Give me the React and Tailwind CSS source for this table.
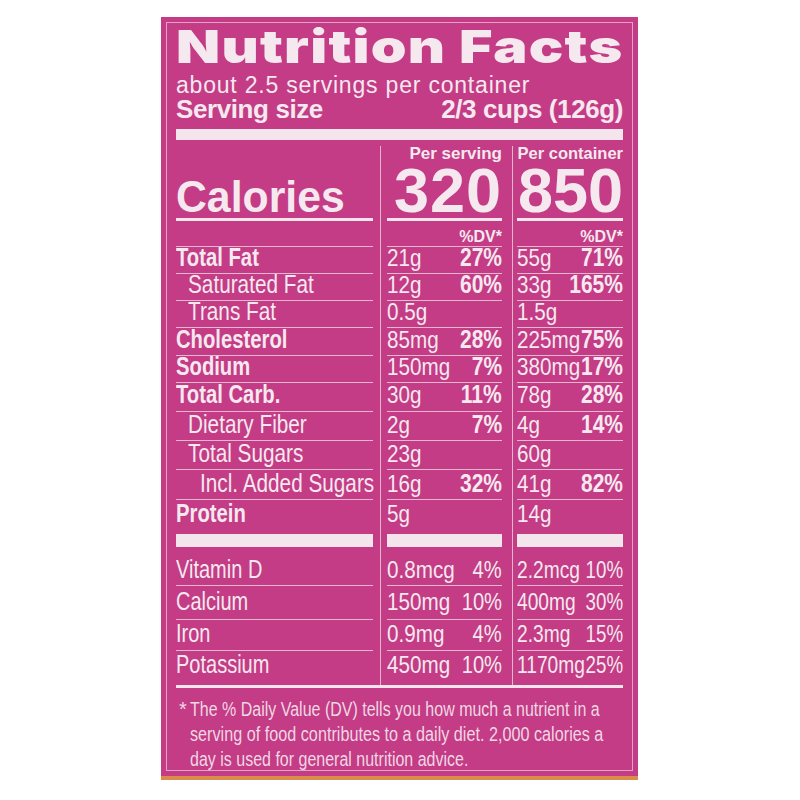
import React from "react";

const rows = [
  { label: "Total Fat", bold: true, ind: "pl-0", v1: "21g", p1: "27%", v2: "55g", p2: "71%", h: "h-[27px]", pb: "pb-[3px]", line: true },
  { label: "Saturated Fat", bold: false, ind: "pl-[12px]", v1: "12g", p1: "60%", v2: "33g", p2: "165%", h: "h-[27px]", pb: "pb-[3px]", line: true },
  { label: "Trans Fat", bold: false, ind: "pl-[12px]", v1: "0.5g", p1: "", v2: "1.5g", p2: "", h: "h-[27px]", pb: "pb-[3px]", line: true },
  { label: "Cholesterol", bold: true, ind: "pl-0", v1: "85mg", p1: "28%", v2: "225mg", p2: "75%", h: "h-[28px]", pb: "pb-[3px]", line: true },
  { label: "Sodium", bold: true, ind: "pl-0", v1: "150mg", p1: "7%", v2: "380mg", p2: "17%", h: "h-[27px]", pb: "pb-[3px]", line: true },
  { label: "Total Carb.", bold: true, ind: "pl-0", v1: "30g", p1: "11%", v2: "78g", p2: "28%", h: "h-[29px]", pb: "pb-[4px]", line: true },
  { label: "Dietary Fiber", bold: false, ind: "pl-[12px]", v1: "2g", p1: "7%", v2: "4g", p2: "14%", h: "h-[29px]", pb: "pb-[3px]", line: true },
  { label: "Total Sugars", bold: false, ind: "pl-[12px]", v1: "23g", p1: "", v2: "60g", p2: "", h: "h-[29px]", pb: "pb-[3px]", line: true },
  { label: "Incl. Added Sugars", bold: false, ind: "pl-[24px]", v1: "16g", p1: "32%", v2: "41g", p2: "82%", h: "h-[30px]", pb: "pb-[3px]", line: true },
  { label: "Protein", bold: true, ind: "pl-0", v1: "5g", p1: "", v2: "14g", p2: "", h: "h-[34px]", pb: "pb-[8px]", line: false },
];

const vits = [
  { label: "Vitamin D", v1: "0.8mcg", p1: "4%", v2: "2.2mcg", p2: "10%", h: "h-[39px]", pb: "pb-[3px]", line: true },
  { label: "Calcium", v1: "150mg", p1: "10%", v2: "400mg", p2: "30%", h: "h-[34px]", pb: "pb-[5px]", line: true },
  { label: "Iron", v1: "0.9mg", p1: "4%", v2: "2.3mg", p2: "15%", h: "h-[31px]", pb: "pb-[4px]", line: true },
  { label: "Potassium", v1: "450mg", p1: "10%", v2: "1170mg", p2: "25%", h: "h-[34px]", pb: "pb-[8px]", line: false },
];

function Div1({ top = "" }) {
  return (
    <div className={`w-[14px] flex justify-center ${top}`}>
      <div className="w-px bg-[#eab4d0]" />
    </div>
  );
}

function Div2({ top = "" }) {
  return (
    <div className={`w-[15px] flex pl-[10px] ${top}`}>
      <div className="w-px bg-[#eab4d0]" />
    </div>
  );
}

function MacroRow({ r }) {
  const lineCls = r.line ? "border-b border-[#e9b6d0]" : "";
  return (
    <div className={`flex ${r.h}`}>
      <div className={`w-[197px] flex items-end ${lineCls} ${r.pb} ${r.ind}`}>
        {r.bold ? (
          <span className="inline-block origin-left scale-x-[0.81] text-[25px] leading-[25px] font-bold whitespace-nowrap">{r.label}</span>
        ) : (
          <span className="inline-block origin-left scale-x-[0.83] text-[25px] leading-[25px] whitespace-nowrap">{r.label}</span>
        )}
      </div>
      <Div1 />
      <div className={`w-[115px] flex items-end ${lineCls} ${r.pb}`}>
        <div className="flex-1 min-w-0 flex whitespace-nowrap text-[24px] leading-[25px]">
          <span className="inline-block origin-left scale-x-[0.86]">{r.v1}</span>
        </div>
        <div className="w-0 flex justify-end whitespace-nowrap text-[25px] leading-[25px] font-bold">
          <span className="inline-block origin-right scale-x-[0.84]">{r.p1}</span>
        </div>
      </div>
      <Div2 />
      <div className={`w-[106px] flex items-end ${lineCls} ${r.pb}`}>
        <div className="flex-1 min-w-0 flex whitespace-nowrap text-[24px] leading-[25px]">
          <span className="inline-block origin-left scale-x-[0.86]">{r.v2}</span>
        </div>
        <div className="w-0 flex justify-end whitespace-nowrap text-[25px] leading-[25px] font-bold">
          <span className="inline-block origin-right scale-x-[0.84]">{r.p2}</span>
        </div>
      </div>
    </div>
  );
}

function VitRow({ r }) {
  const lineCls = r.line ? "border-b border-[#e9b6d0]" : "";
  return (
    <div className={`flex ${r.h}`}>
      <div className={`w-[197px] flex items-end ${lineCls} ${r.pb}`}>
        <span className="inline-block origin-left scale-x-[0.8] text-[25px] leading-[25px] whitespace-nowrap">{r.label}</span>
      </div>
      <Div1 />
      <div className={`w-[115px] flex items-end ${lineCls} ${r.pb}`}>
        <div className="flex-1 min-w-0 flex whitespace-nowrap text-[24px] leading-[25px]">
          <span className="inline-block origin-left scale-x-[0.86]">{r.v1}</span>
        </div>
        <div className="w-0 flex justify-end whitespace-nowrap text-[24px] leading-[25px]">
          <span className="inline-block origin-right scale-x-[0.84]">{r.p1}</span>
        </div>
      </div>
      <Div2 />
      <div className={`w-[106px] flex items-end ${lineCls} ${r.pb}`}>
        <div className="flex-1 min-w-0 flex whitespace-nowrap text-[24px] leading-[25px]">
          <span className="inline-block origin-left scale-x-[0.8]">{r.v2}</span>
        </div>
        <div className="w-0 flex justify-end whitespace-nowrap text-[24px] leading-[25px]">
          <span className="inline-block origin-right scale-x-[0.78]">{r.p2}</span>
        </div>
      </div>
    </div>
  );
}

function ThickBar() {
  return (
    <div className="flex h-[13px]">
      <div className="w-[197px] bg-[#f4e5ed]" />
      <Div1 />
      <div className="w-[115px] bg-[#f4e5ed]" />
      <Div2 />
      <div className="w-[106px] bg-[#f4e5ed]" />
    </div>
  );
}

export default function App() {
  return (
    <div className="w-[800px] h-[800px] bg-white pl-[161px] pt-[17px]">
      <div className="w-[477px] h-[763px] bg-[#c33c85] p-[5px] border-b-[4px] border-[#d98c4c] text-[#f6e8ef] font-['Liberation_Sans',Arial,sans-serif]">
        <div className="h-full border border-[#e3a3c4] px-[9px]">
          <div className="h-[47px] leading-[47px] text-[46px] font-black font-['Inter',sans-serif] whitespace-nowrap">
            <span className="inline-block origin-left scale-x-[1.247] tracking-[1px]">Nutrition Facts</span>
          </div>
          <div className="h-[30px] leading-[30px] text-[23px] tracking-[0.8px] whitespace-nowrap">
            about 2.5 servings per container
          </div>
          <div className="h-[19px] leading-[19px] text-[26px] font-bold tracking-[-0.4px] flex justify-between whitespace-nowrap">
            <span>Serving size</span>
            <span>2/3 cups (126g)</span>
          </div>
          <div className="mt-[10px] h-[11px] bg-[#f4e5ed]" />

          <div className="flex h-[107px] font-bold">
            <div className="w-[197px] flex flex-col border-b border-[#e9b6d0] pt-[36px]">
              <div className="h-[42px] leading-[42px] text-[45px] whitespace-nowrap">
                <span className="inline-block origin-left scale-x-[0.95]">Calories</span>
              </div>
              <div className="h-[3px] bg-[#f4e5ed]" />
            </div>
            <Div1 top="pt-[6px]" />
            <div className="w-[115px] flex flex-col border-b border-[#e9b6d0] pt-[5px]">
              <div className="h-[17px] leading-[17px] text-[17px] text-right whitespace-nowrap">Per serving</div>
              <div className="mt-[3px] h-[50px] leading-[50px] text-[63px] text-right tracking-[1px] whitespace-nowrap">320</div>
              <div className="mt-[3px] h-[3px] bg-[#f4e5ed]" />
              <div className="mt-[8px] h-[16px] leading-[16px] text-[16px] text-right whitespace-nowrap">%DV*</div>
            </div>
            <Div2 top="pt-[6px]" />
            <div className="w-[106px] flex flex-col border-b border-[#e9b6d0] pt-[5px]">
              <div className="h-[17px] leading-[17px] text-[16.5px] text-right whitespace-nowrap">Per container</div>
              <div className="mt-[3px] h-[50px] leading-[50px] text-[63px] text-right whitespace-nowrap">850</div>
              <div className="mt-[3px] h-[3px] bg-[#f4e5ed]" />
              <div className="mt-[8px] h-[16px] leading-[16px] text-[16px] text-right whitespace-nowrap">%DV*</div>
            </div>
          </div>

          {rows.map((r) => (
            <MacroRow key={r.label} r={r} />
          ))}
          <ThickBar />
          {vits.map((r) => (
            <VitRow key={r.label} r={r} />
          ))}
          <div className="h-[3px] bg-[#f4e5ed]" />

          <div className="pt-[9px] flex text-[20px] leading-[25px] text-[#f1d6e4]">
            <div className="w-[14px] pl-[3px]">*</div>
            <div className="flex-1 min-w-0">
              <span className="block origin-left scale-x-[0.8] whitespace-nowrap">The % Daily Value (DV) tells you how much a nutrient in a</span>
              <span className="block origin-left scale-x-[0.81] whitespace-nowrap">serving of food contributes to a daily diet. 2,000 calories a</span>
              <span className="block origin-left scale-x-[0.8] whitespace-nowrap">day is used for general nutrition advice.</span>
            </div>
          </div>
        </div>
      </div>
    </div>
  );
}
